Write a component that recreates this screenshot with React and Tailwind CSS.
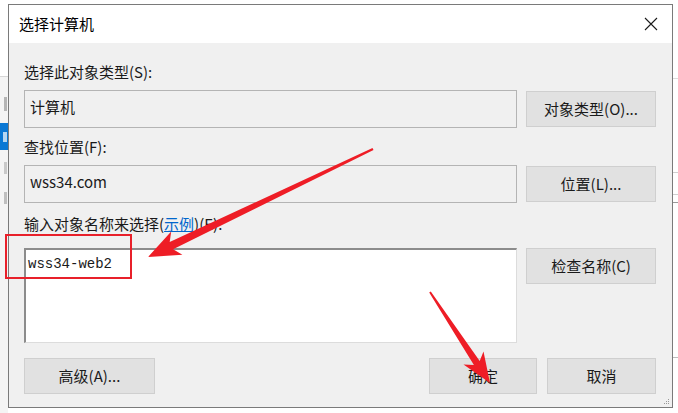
import React from "react";

const Btn = ({ children, className = "" }) => (
  <div
    className={`flex items-center justify-center h-[36px] bg-[#e1e1e1] border border-[#cfcfcf] text-[15px] leading-[20px] text-[#1a1a1a] ${className}`}
  >
    {children}
  </div>
);

const Label = ({ children, className = "" }) => (
  <div className={`text-[15px] leading-[20px] text-[#1a1a1a] ${className}`}>{children}</div>
);

const ReadBox = ({ children }) => (
  <div className="w-[493px] h-[38px] border border-[#b4b4b4] bg-[#f0f0f0] pl-[5px] pt-[6px] text-[15px] leading-[20px] text-[#1a1a1a]">
    {children}
  </div>
);

export default function App() {
  return (
    <div className="relative w-[678px] h-[413px] bg-white overflow-hidden font-['Noto_Sans_CJK_SC','Noto_Sans',sans-serif]">
      {/* window behind, left edge */}
      <div className="absolute left-0 top-[76px] w-[8px] h-[337px] bg-[#f4f4f4] border-t border-[#d6d6d6]">
        <div className="mt-[20px] h-[14px] w-[3px] ml-[4px] bg-[#8a8a8a] opacity-60" />
        <div className="mt-[12px] h-[27px] bg-[#0a78d4] flex items-center">
          <div className="ml-[3px] w-[4px] h-[10px] bg-white opacity-70" />
        </div>
        <div className="mt-[12px] h-[12px] w-[3px] ml-[4px] bg-[#8a8a8a] opacity-40" />
        <div className="mt-[18px] h-[12px] w-[3px] ml-[4px] bg-[#8a8a8a] opacity-50" />
      </div>
      {/* window behind, right edge */}
      <div className="absolute left-[673px] top-[78px] w-[5px] h-[335px] border-t border-[#dcdcdc]">
        <div className="mt-[93px] border-t border-[#cfcfcf]" />
        <div className="mt-[21px] border-t border-[#cfcfcf]" />
        <div className="mt-[7px] border-t border-[#9a9a9a]" />
        <div className="mt-[154px] border-t border-[#bdbdbd]" />
      </div>

      {/* dialog */}
      <div className="absolute left-[8px] top-[4px] w-[665px] h-[404px] border border-[#7a7a7a] bg-[#f0f0f0] flex flex-col">
        <div className="h-[38px] bg-white flex items-center justify-between pl-[10px] pr-[14px]">
          <span className="text-[15px] leading-[20px] text-black">选择计算机</span>
          <svg width="14" height="14" viewBox="0 0 14 14">
            <path d="M1 1 L13 13 M13 1 L1 13" stroke="#1a1a1a" strokeWidth="1.1" fill="none" />
          </svg>
        </div>

        <div className="pl-[15px] pr-[16px] flex flex-col">
          <Label className="mt-[19px]">选择此对象类型(S):</Label>
          <div className="mt-[8px] flex items-center gap-[9px]">
            <ReadBox>计算机</ReadBox>
            <Btn className="w-[130px]">对象类型(O)...</Btn>
          </div>

          <Label className="mt-[9px]">查找位置(F):</Label>
          <div className="mt-[8px] flex items-center gap-[9px]">
            <ReadBox>wss34.com</ReadBox>
            <Btn className="w-[130px]">位置(L)...</Btn>
          </div>

          <Label className="mt-[11px]">
            输入对象名称来选择(<span className="text-[#0066cc] underline">示例</span>)(E):
          </Label>
          <div className="mt-[14px] flex items-start gap-[9px]">
            <div className="w-[493px] h-[95px] bg-white border-t-2 border-l-2 border-r border-b border-t-[#8c8c8c] border-l-[#8c8c8c] border-r-[#dcdcdc] border-b-[#dcdcdc] pl-[2px] pt-[4px] font-['Liberation_Mono',monospace] text-[14px] leading-[20px] text-[#1a1a1a]">
              wss34-web2
            </div>
            <Btn className="w-[130px]">检查名称(C)</Btn>
          </div>

          <div className="mt-[15px] flex items-center">
            <Btn className="w-[131px]">高级(A)...</Btn>
            <div className="flex-1" />
            <Btn className="w-[108px] border-[#0078d7]">确定</Btn>
            <Btn className="w-[109px] ml-[10px]">取消</Btn>
          </div>
        </div>

        {/* size grip */}
        <div className="absolute right-[2px] bottom-[2px] w-[6px] h-[6px] grid grid-cols-3 gap-[0px]">
          <span />
          <span />
          <span className="w-[1px] h-[1px] bg-[#999]" />
          <span />
          <span className="w-[1px] h-[1px] bg-[#999]" />
          <span className="w-[1px] h-[1px] bg-[#999]" />
          <span className="w-[1px] h-[1px] bg-[#999]" />
          <span className="w-[1px] h-[1px] bg-[#999]" />
          <span className="w-[1px] h-[1px] bg-[#999]" />
        </div>
      </div>

      {/* red highlight box */}
      <div className="absolute left-[5px] top-[234px] w-[127px] h-[45px] border-2 border-[#e8202a]" />

      {/* red arrows */}
      <svg className="absolute left-0 top-0" width="678" height="413" viewBox="0 0 678 413">
        <polygon
          fill="#ee1d26"
          points="148,257 182.4,254.8 173.1,249.3 373.5,150 372.5,148 169.7,242.1 171.2,231.4"
        />
        <polygon
          fill="#ee1d26"
          points="490,383 463.5,364.6 473.9,364.9 429.2,292.6 430.8,291.4 479.7,361.1 483.5,351.4"
        />
      </svg>
    </div>
  );
}
